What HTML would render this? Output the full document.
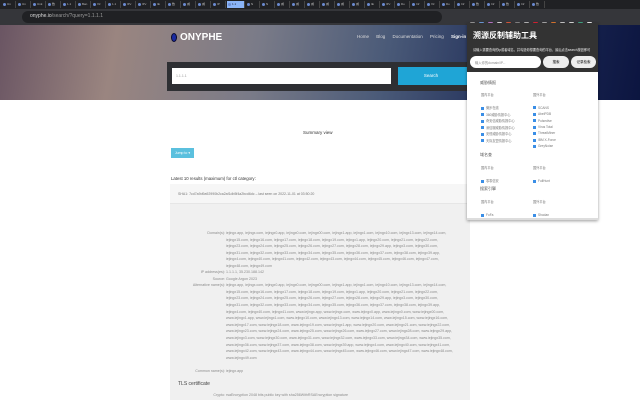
<!DOCTYPE html>
<html><head><meta charset="utf-8"><style>
*{margin:0;padding:0;box-sizing:border-box}
body{width:640px;height:400px;overflow:hidden;background:#fff;font-family:"Liberation Sans","Noto Sans CJK SC",sans-serif;position:relative}
.abs{position:absolute}
.tabs{left:0;top:0;width:640px;height:9px;background:#202124;display:flex;gap:1px;padding:1px 2px}
.tabs i{display:block;width:14px;height:7px;font-style:normal;font-size:3px;color:#bbb;line-height:7px;padding-left:5px;position:relative;border-right:1px solid #444}
.tabs i:before{content:"";position:absolute;left:1px;top:2px;width:3px;height:3px;border-radius:50%;background:#6a8ad0}
.addr{left:0;top:9px;width:640px;height:16px;background:#35363a}
.hero{left:0;top:25px;width:640px;height:75px;background:linear-gradient(100deg,#6a5563 0%,#9a8580 18%,#7a7b88 40%,#4a5a78 60%,#1f2d58 80%,#0c1540 100%)}
.t{font-size:4px;color:#777;white-space:nowrap}
.gray{color:#8a8a8a;font-size:3.6px;line-height:6.6px}
.cb{display:inline-block;width:3px;height:3px;background:#3a8ee6;margin-right:2px;vertical-align:middle}
.ext{display:inline-block;width:5px;height:5px;border-radius:1px;margin-right:4px}
</style></head><body>
<div class="abs tabs"><i>Un</i><i>Un</i><i>Unk</i><i>数</i><i>1.1</i><i>Ban</i><i>Vir</i><i>1.1</i><i>IPv</i><i>IPv</i><i>IE</i><i>数</i><i>威</i><i>威</i><i>IP</i><i style="width:18px;background:#8ab4f8;color:#223">1.1</i><i>N</i><i>N</i><i>威</i><i>威</i><i>威</i><i>威</i><i>威</i><i>威</i><i>IE</i><i>IPv</i><i>Do</i><i>Inf</i><i>Vir</i><i>Do</i><i>Inf</i><i>数</i><i>Inf</i><i>数</i><i>Inf</i><i>数</i></div>
<div class="abs addr"></div>
<div class="abs" style="left:22px;top:11px;width:420px;height:12px;background:#202124;border-radius:6px"></div>
<div class="abs" style="left:30px;top:13px;font-size:5px;color:#ddd">onyphe.io<span style="color:#999">/search/?query=1.1.1.1</span></div>
<div class="abs" style="left:470px;top:14px;white-space:nowrap"><span class="ext" style="background:#999"></span><span class="ext" style="background:#6fa0e0"></span><span class="ext" style="background:#c07ad0"></span><span class="ext" style="background:#ddd"></span><span class="ext" style="background:#e05a3a"></span><span class="ext" style="background:#888"></span><span class="ext" style="background:#bbb"></span><span class="ext" style="background:#d23"></span><span class="ext" style="background:#aaa"></span><span class="ext" style="background:#e07a30"></span><span class="ext" style="background:#ccc"></span><span class="ext" style="background:#ddd"></span><span class="ext" style="background:#4a8"></span><span class="ext" style="background:#eee"></span></div>
<div class="abs hero"></div>
<div class="abs" style="left:171px;top:33px;width:6px;height:9px;border-radius:50%;background:#1a2aa0;border:1.5px solid #0a0a30"></div>
<div class="abs" style="left:180px;top:32px;font-size:10px;font-weight:bold;color:#fff">ONYPHE</div>
<div class="abs" style="left:357px;top:34px;font-size:4.5px;color:#ddd;word-spacing:6px">Home Blog Documentation Pricing <b style="color:#fff">Sign-in</b></div>
<div class="abs" style="left:167px;top:62px;width:305px;height:29px;background:#2e2f33"></div>
<div class="abs" style="left:172px;top:68px;width:219px;height:16px;background:#fff"></div>
<div class="abs t" style="left:176px;top:74px;font-size:3.5px;color:#999">1.1.1.1</div>
<div class="abs" style="left:398px;top:67px;width:74px;height:18px;background:#1fa5d6;color:#fff;font-size:4.5px;text-align:center;line-height:18px;padding-right:8px">Search</div>
<div class="abs t" style="left:303px;top:130px;color:#333;font-size:4.5px">Summary view</div>
<div class="abs" style="left:171px;top:148px;width:23px;height:10px;background:#5bc0de;color:#fff;font-size:3.5px;line-height:10px;text-align:center">Jump to ▾</div>
<div class="abs t" style="left:171px;top:176px;color:#333;font-size:4.3px">Latest 10 results (maximum) for ctl category:</div>
<div class="abs" style="left:170px;top:184px;width:300px;height:216px;background:#f0f0f0"></div>
<div class="abs" style="left:170px;top:184px;width:300px;height:20px;background:#f6f6f6;border-bottom:1px solid #e6e6e6"></div>
<div class="abs t" style="left:178px;top:192px;font-size:3.5px">SHA1: 7cd7a9d9a92990b2ca2af1db5f4a2bcd6dc – last seen on 2022-11-01 at 03:50:20</div>
<div class="abs gray" style="left:170px;top:230px;width:55px;text-align:right">Domain(s):</div>
<div class="abs gray" style="left:226px;top:230px;width:235px">iejingx.app, iejingx.com, iejingx0.app, iejingx0.com, iejingx00.com, iejingx1.app, iejingx1.com, iejingx10.com, iejingx13.com, iejingx14.com, iejingx15.com, iejingx16.com, iejingx17.com, iejingx18.com, iejingx19.com, iejingx1.app, iejingx20.com, iejingx21.com, iejingx22.com, iejingx23.com, iejingx24.com, iejingx25.com, iejingx26.com, iejingx27.com, iejingx28.com, iejingx29.app, iejingx3.com, iejingx30.com, iejingx31.com, iejingx32.com, iejingx33.com, iejingx34.com, iejingx35.com, iejingx36.com, iejingx37.com, iejingx38.com, iejingx39.app, iejingx4.com, iejingx40.com, iejingx41.com, iejingx42.com, iejingx43.com, iejingx44.com, iejingx45.com, iejingx46.com, iejingx47.com, iejingx48.com, iejingx49.com</div>
<div class="abs gray" style="left:170px;top:269px;width:55px;text-align:right">IP address(es):<br>Source:<br>Alternative name(s):</div>
<div class="abs gray" style="left:226px;top:269px;width:235px">1.1.1.1, 35.230.188.142<br>Google Argon 2023<br>iejingx.app, iejingx.com, iejingx0.app, iejingx0.com, iejingx00.com, iejingx1.app, iejingx1.com, iejingx10.com, iejingx13.com, iejingx14.com, iejingx15.com, iejingx16.com, iejingx17.com, iejingx18.com, iejingx19.com, iejingx1.app, iejingx20.com, iejingx21.com, iejingx22.com, iejingx23.com, iejingx24.com, iejingx25.com, iejingx26.com, iejingx27.com, iejingx28.com, iejingx29.app, iejingx3.com, iejingx30.com, iejingx31.com, iejingx32.com, iejingx33.com, iejingx34.com, iejingx35.com, iejingx36.com, iejingx37.com, iejingx38.com, iejingx39.app, iejingx4.com, iejingx40.com, iejingx41.com, www.iejingx.app, www.iejingx.com, www.iejingx0.app, www.iejingx0.com, www.iejingx00.com, www.iejingx1.app, www.iejingx1.com, www.iejingx10.com, www.iejingx13.com, www.iejingx14.com, www.iejingx15.com, www.iejingx16.com, www.iejingx17.com, www.iejingx18.com, www.iejingx19.com, www.iejingx1.app, www.iejingx20.com, www.iejingx21.com, www.iejingx22.com, www.iejingx23.com, www.iejingx24.com, www.iejingx25.com, www.iejingx26.com, www.iejingx27.com, www.iejingx28.com, www.iejingx29.app, www.iejingx3.com, www.iejingx30.com, www.iejingx31.com, www.iejingx32.com, www.iejingx33.com, www.iejingx34.com, www.iejingx35.com, www.iejingx36.com, www.iejingx37.com, www.iejingx38.com, www.iejingx39.app, www.iejingx4.com, www.iejingx40.com, www.iejingx41.com, www.iejingx42.com, www.iejingx43.com, www.iejingx44.com, www.iejingx45.com, www.iejingx46.com, www.iejingx47.com, www.iejingx48.com, www.iejingx49.com</div>
<div class="abs gray" style="left:170px;top:368px;width:55px;text-align:right">Common name(s):</div>
<div class="abs gray" style="left:226px;top:368px">iejingx.app</div>
<div class="abs t" style="left:178px;top:381px;color:#444;font-size:5px">TLS certificate</div>
<div class="abs gray" style="left:170px;top:392px;width:55px;text-align:right">Crypto:</div>
<div class="abs gray" style="left:226px;top:392px">rsaEncryption 2048 bits public key with sha256WithRSAEncryption signature</div>
<!-- popup -->
<div class="abs" style="left:467px;top:23px;width:131px;height:197px;background:#fff;box-shadow:0 1px 3px rgba(0,0,0,.4)"></div>
<div class="abs" style="left:467px;top:23px;width:131px;height:49px;background:#333"></div>
<div class="abs" style="left:473px;top:30px;font-size:8px;font-weight:bold;color:#fff;white-space:nowrap">溯源反制辅助工具</div>
<div class="abs" style="left:473px;top:47px;font-size:3.2px;color:#eee;white-space:nowrap">请输入需要查询的ip或者域名，并勾选你想要查询的平台，最后点击search按钮即可</div>
<div class="abs" style="left:470px;top:56px;width:71px;height:12px;background:#fff;border-radius:6px;font-size:3.3px;color:#888;padding:4px 0 0 5px">输入你的domain/IP...</div>
<div class="abs" style="left:543px;top:56px;width:26px;height:12px;background:#eee;border-radius:6px;font-size:3.5px;text-align:center;line-height:12px">搜索</div>
<div class="abs" style="left:571px;top:56px;width:25px;height:12px;background:#eee;border-radius:6px;font-size:3.5px;text-align:center;line-height:12px">记录检索</div>
<div class="abs" style="left:480px;top:80px;font-size:4px;color:#555;line-height:6px;white-space:nowrap">威胁情报</div>
<div class="abs" style="left:481px;top:92px;font-size:3.2px;color:#777;line-height:6.5px;white-space:nowrap">国内平台<br><br><span class="cb"></span>微步在线<br><span class="cb"></span>360威胁情报中心<br><span class="cb"></span>奇安信威胁情报中心<br><span class="cb"></span>深信服威胁情报中心<br><span class="cb"></span>安恒威胁情报中心<br><span class="cb"></span>天际友盟情报中心</div>
<div class="abs" style="left:533px;top:92px;font-size:3.2px;color:#777;line-height:6.4px;white-space:nowrap">国外平台<br><br><span class="cb"></span>SCANS<br><span class="cb"></span>AbeIPDB<br><span class="cb"></span>Pulsedive<br><span class="cb"></span>Virus Total<br><span class="cb"></span>ThreatMiner<br><span class="cb"></span>IBM X-Force<br><span class="cb"></span>GreyNoise</div>
<div class="abs" style="left:480px;top:152px;font-size:4px;color:#555">域名查</div>
<div class="abs" style="left:481px;top:165px;font-size:3.2px;color:#777;line-height:6.5px;white-space:nowrap">国内平台<br><br><span class="cb"></span>零零信安</div>
<div class="abs" style="left:533px;top:165px;font-size:3.2px;color:#777;line-height:6.5px;white-space:nowrap">国外平台<br><br><span class="cb"></span>FullHunt</div>
<div class="abs" style="left:480px;top:186px;font-size:4px;color:#555">搜索引擎</div>
<div class="abs" style="left:481px;top:199px;font-size:3.2px;color:#777;line-height:6.5px;white-space:nowrap">国内平台<br><br><span class="cb"></span>FoFa</div>
<div class="abs" style="left:533px;top:199px;font-size:3.2px;color:#777;line-height:6.5px;white-space:nowrap">国外平台<br><br><span class="cb"></span>Shodan</div>
<div class="abs" style="left:467px;top:218px;width:131px;height:2px;background:#ddd"></div>
</body></html>
